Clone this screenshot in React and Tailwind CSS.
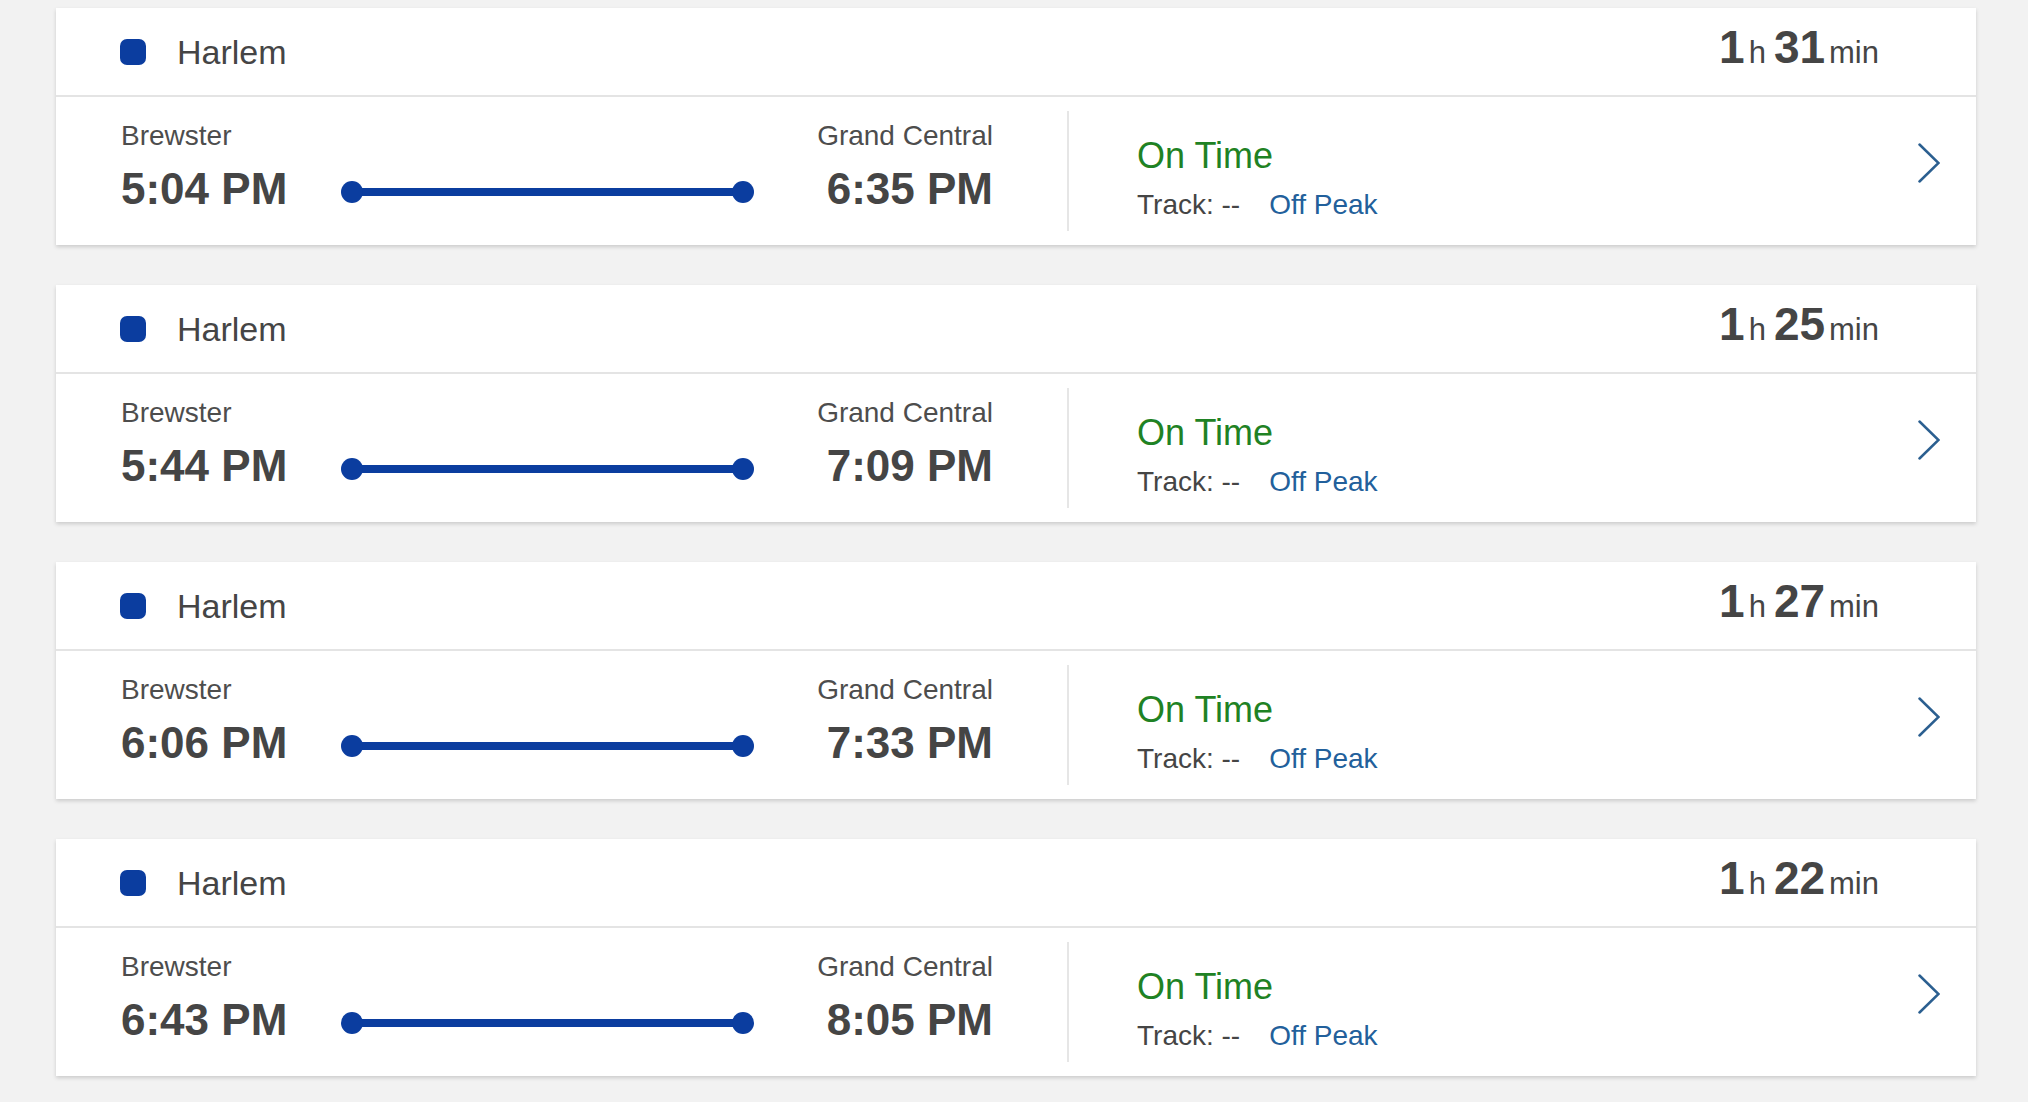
import React from "react";

const trips = [
  { dep: "5:04 PM", arr: "6:35 PM", h: "1", m: "31" },
  { dep: "5:44 PM", arr: "7:09 PM", h: "1", m: "25" },
  { dep: "6:06 PM", arr: "7:33 PM", h: "1", m: "27" },
  { dep: "6:43 PM", arr: "8:05 PM", h: "1", m: "22" },
];

const font = { fontFamily: '"Liberation Sans", Arial, Helvetica, sans-serif' };

function Card({ t }) {
  return (
    <div className="w-[1920px] bg-white shadow-[0_2px_4px_rgba(0,0,0,0.16)]">
      <div className="flex h-[89px] items-center border-b-2 border-[#e4e4e4] pl-[64px] pr-[97px]">
        <div className="h-[26px] w-[26px] rounded-[7px] bg-[#0b3d9f]" />
        <div className="ml-[31px] text-[34px] leading-[40px] text-[#454545]">Harlem</div>
        <div className="mb-[10px] ml-auto flex items-baseline text-[#454545]">
          <span className="text-[46px] font-bold leading-[46px]">{t.h}</span>
          <span className="ml-[4px] text-[31px] leading-[31px]">h</span>
          <span className="ml-[8px] text-[46px] font-bold leading-[46px]">{t.m}</span>
          <span className="ml-[4px] text-[31px] leading-[31px]">min</span>
        </div>
      </div>
      <div className="flex h-[148px]">
        <div className="flex w-[937px] pl-[65px]">
          <div className="flex w-[220px] flex-col pt-[23px]">
            <div className="text-[28px] leading-[32px] text-[#4d4d4d]">Brewster</div>
            <div className="mt-[15px] text-[44px] font-bold leading-[44px] text-[#454545]">{t.dep}</div>
          </div>
          <div className="relative mt-[84px] h-[22px] w-[413px] self-start">
            <div className="absolute left-[11px] right-[11px] top-[7px] h-[8px] bg-[#0b3d9f]" />
            <div className="absolute left-0 top-0 h-[22px] w-[22px] rounded-full bg-[#0b3d9f]" />
            <div className="absolute right-0 top-0 h-[22px] w-[22px] rounded-full bg-[#0b3d9f]" />
          </div>
          <div className="flex flex-1 flex-col items-end pt-[23px]">
            <div className="text-[28px] leading-[32px] text-[#4d4d4d]">Grand Central</div>
            <div className="mt-[15px] text-[44px] font-bold leading-[44px] text-[#454545]">{t.arr}</div>
          </div>
        </div>
        <div className="my-[14px] ml-[74px] w-[2px] bg-[#e6e6e6]" />
        <div className="flex flex-col pl-[68px] pt-[39px]">
          <div className="text-[36px] leading-[40px] text-[#1f8224]">On Time</div>
          <div className="mt-[13px] flex text-[28px] leading-[32px]">
            <span className="text-[#454545]">Track: --</span>
            <span className="ml-[29px] text-[#22609b]">Off Peak</span>
          </div>
        </div>
        <div className="ml-auto flex pr-[36px] pt-[46px]">
          <svg width="22" height="40" viewBox="0 0 22 40" fill="none">
            <polyline points="1.5,1.5 20.5,20 1.5,38.5" stroke="#2b5f90" strokeWidth="2.5" strokeLinecap="round" strokeLinejoin="miter" />
          </svg>
        </div>
      </div>
    </div>
  );
}

export default function App() {
  return (
    <div className="min-h-[1102px] w-[2028px] bg-[#f2f2f2] pl-[56px] pt-[8px]" style={font}>
      <div className="flex flex-col gap-[40px]">
        {trips.map((t, i) => (
          <Card key={i} t={t} />
        ))}
      </div>
    </div>
  );
}
